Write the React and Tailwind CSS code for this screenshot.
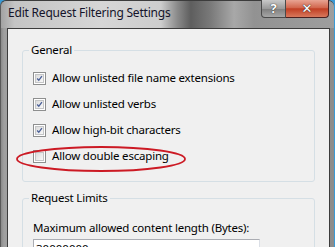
import React from "react";

const font = { fontFamily: '"Noto Sans", "Open Sans", sans-serif' };

function Check({ checked }) {
  return (
    <div className="w-[13px] h-[13px] border border-[#8e8f8f] bg-white p-[1px] shrink-0">
      <div className="w-full h-full border border-[#c4c5c6] bg-[linear-gradient(135deg,#dcdcdc,#f8f8f8)] flex items-center justify-center">
        {checked && (
          <svg width="9" height="9" viewBox="0 0 9 9">
            <path d="M1.5 4.5 L3.6 6.8 L7.6 1.4" fill="none" stroke="#4a5f97" strokeWidth="1.7" />
          </svg>
        )}
      </div>
    </div>
  );
}

function Row({ checked, label }) {
  return (
    <div className="flex items-center gap-[6px] h-[26px]">
      <Check checked={checked} />
      <span className="text-[11.5px] tracking-[-0.2px] text-black leading-none">{label}</span>
    </div>
  );
}

export default function App() {
  return (
    <div className="w-[335px] h-[247px] overflow-hidden bg-[#3a9ad6] relative" style={font}>
      <div className="w-[334px] h-[270px] flex flex-col border-l border-[#5a5a5a] bg-[linear-gradient(to_right,#8a8a8a,#a0a0a0_3px,#8c8c8c)] rounded-tr-[6px] rounded-tl-[6px] border-t border-t-[#3c3c3c]">
        <div className="h-[27px] shrink-0 flex items-start relative bg-[linear-gradient(to_right,#a2a2a2_0%,#c4c4c4_4%,#d6d6d6_30%,#cdcdcd_48%,#8a8a8a_53%,#5e5e5e_57%,#7a7a7a_63%,#a8a8a8_70%,#929292_76%,#9e9e9e_100%)] rounded-tl-[6px] rounded-tr-[6px]">
          <span className="ml-[7px] mt-[6px] text-[12px] tracking-[-0.2px] text-[#14142a] leading-none">Edit Request Filtering Settings</span>
          <div className="ml-auto mr-[5px] flex -mt-[1px]">
            <div className="w-[25px] h-[18px] border border-[#4a4a4a] border-t-0 rounded-bl-[4px] bg-[linear-gradient(to_bottom,#c8c8c8,#9a9a9a_50%,#7e7e7e_51%,#a6a6a6)] flex items-center justify-center">
              <span className="text-white text-[13px] font-bold leading-none [text-shadow:0_0_1px_#333,0_0_1px_#333]">?</span>
            </div>
            <div className="w-[43px] h-[18px] border border-[#4a2020] border-l-0 border-t-0 rounded-br-[4px] bg-[linear-gradient(to_bottom,#e8a493,#d2674e_45%,#c13f24_52%,#d8785c)] flex items-center justify-center">
              <span className="text-white text-[13px] font-bold leading-none [text-shadow:0_0_1px_#333,0_0_1px_#333]" style={{ fontFamily: '"DejaVu Sans", sans-serif' }}>✕</span>
            </div>
          </div>
        </div>
        <div className="ml-[6px] mr-[4px] flex-1 border border-[#3c3c3c] bg-[#f0f0f0] px-[14px] relative">
          <fieldset className="mt-[13px] border border-[#d5dfe5] rounded-[3px] pl-[10px] pb-[5px] h-[140px]">
            <legend className="px-[2px] -ml-[4px] text-[11.5px] tracking-[-0.2px] text-black leading-[16px]">General</legend>
            <div className="mt-[7px] flex flex-col">
              <Row checked label="Allow unlisted file name extensions" />
              <Row checked label="Allow unlisted verbs" />
              <Row checked label="Allow high-bit characters" />
              <Row checked={false} label="Allow double escaping" />
            </div>
          </fieldset>
          <fieldset className="mt-[8px] border border-[#d5dfe5] rounded-[3px] pl-[10px] h-[80px]">
            <legend className="px-[2px] -ml-[4px] text-[11.5px] tracking-[-0.2px] text-black leading-[16px]">Request Limits</legend>
            <div className="mt-[16px] text-[11.5px] tracking-[-0.2px] text-black leading-none">Maximum allowed content length (Bytes):</div>
            <div className="mt-[5px] w-[227px] h-[21px] border border-[#abadb3] border-b-[#e3e9ef] border-r-[#dbdfe6] bg-white px-[2px] pt-[3px] text-[11.5px] leading-none">30000000</div>
          </fieldset>
          <svg className="absolute left-[7px] top-[116px]" width="174" height="28" viewBox="0 0 174 28">
            <ellipse cx="86" cy="14" rx="84" ry="12" fill="none" stroke="#cc1a24" strokeWidth="1.8" />
          </svg>
        </div>
      </div>
    </div>
  );
}
